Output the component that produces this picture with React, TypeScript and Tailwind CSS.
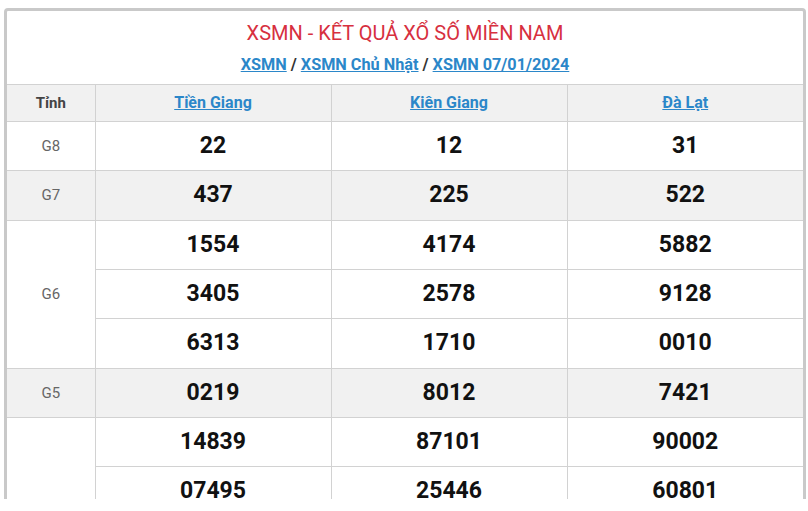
const provinces = ['Tiền Giang', 'Kiên Giang', 'Đà Lạt'];

const prizes: { name: string; rows: string[][] }[] = [
  { name: 'G8', rows: [['22', '12', '31']] },
  { name: 'G7', rows: [['437', '225', '522']] },
  {
    name: 'G6',
    rows: [
      ['1554', '4174', '5882'],
      ['3405', '2578', '9128'],
      ['6313', '1710', '0010'],
    ],
  },
  { name: 'G5', rows: [['0219', '8012', '7421']] },
  {
    name: 'G4',
    rows: [
      ['14839', '87101', '90002'],
      ['07495', '25446', '60801'],
      ['42017', '33290', '11538'],
      ['58264', '06127', '73945'],
      ['91350', '48812', '25679'],
      ['36071', '70593', '84216'],
      ['62908', '19734', '03382'],
    ],
  },
];

export default function App() {
  return (
    <div
      className="h-[499px] overflow-hidden bg-white pl-1 pr-[2px] pt-2"
      style={{ fontFamily: 'Roboto, "Liberation Sans", sans-serif' }}
    >
      <div className="rounded border-[3px] border-[#c9c9c9] bg-white">
        <div className="flex h-[73px] flex-col items-center">
          <h1 className="mt-[9px] text-[20px] leading-[26px] text-[#d7303f]">
            XSMN - KẾT QUẢ XỔ SỐ MIỀN NAM
          </h1>
          <div className="mt-[9px] text-[16.25px] font-bold leading-[20px] text-[#333]">
            <a className="text-[#2b87c9] underline">XSMN</a>
            {' / '}
            <a className="text-[#2b87c9] underline">XSMN Chủ Nhật</a>
            {' / '}
            <a className="text-[#2b87c9] underline">XSMN 07/01/2024</a>
          </div>
        </div>

        <table className="w-full table-fixed border-collapse">
          <colgroup>
            <col className="w-[88px]" />
            <col />
            <col />
            <col />
          </colgroup>
          <thead>
            <tr className="h-[37px] bg-[#f1f1f1]">
              <th className="border-t border-[#d2d2d2] text-[15px] font-bold text-[#444]">Tỉnh</th>
              {provinces.map((p) => (
                <th key={p} className="border-l border-t border-[#d2d2d2] text-[16px] font-bold">
                  <a className="text-[#2b87c9] underline">{p}</a>
                </th>
              ))}
            </tr>
          </thead>
          <tbody>
            {prizes.map((prize, pi) =>
              prize.rows.map((row, ri) => (
                <tr key={prize.name + ri} className={`h-[49.35px] ${pi % 2 === 1 ? 'bg-[#f1f1f1]' : 'bg-white'}`}>
                  {ri === 0 && (
                    <td
                      rowSpan={prize.rows.length}
                      className="border-t border-[#d2d2d2] text-center text-[15px] text-[#666]"
                    >
                      {prize.name}
                    </td>
                  )}
                  {row.map((n, ci) => (
                    <td
                      key={ci}
                      className="border-l border-t border-[#d2d2d2] text-center text-[23px] font-bold text-[#111]"
                    >
                      {n}
                    </td>
                  ))}
                </tr>
              ))
            )}
          </tbody>
        </table>
      </div>
    </div>
  );
}
